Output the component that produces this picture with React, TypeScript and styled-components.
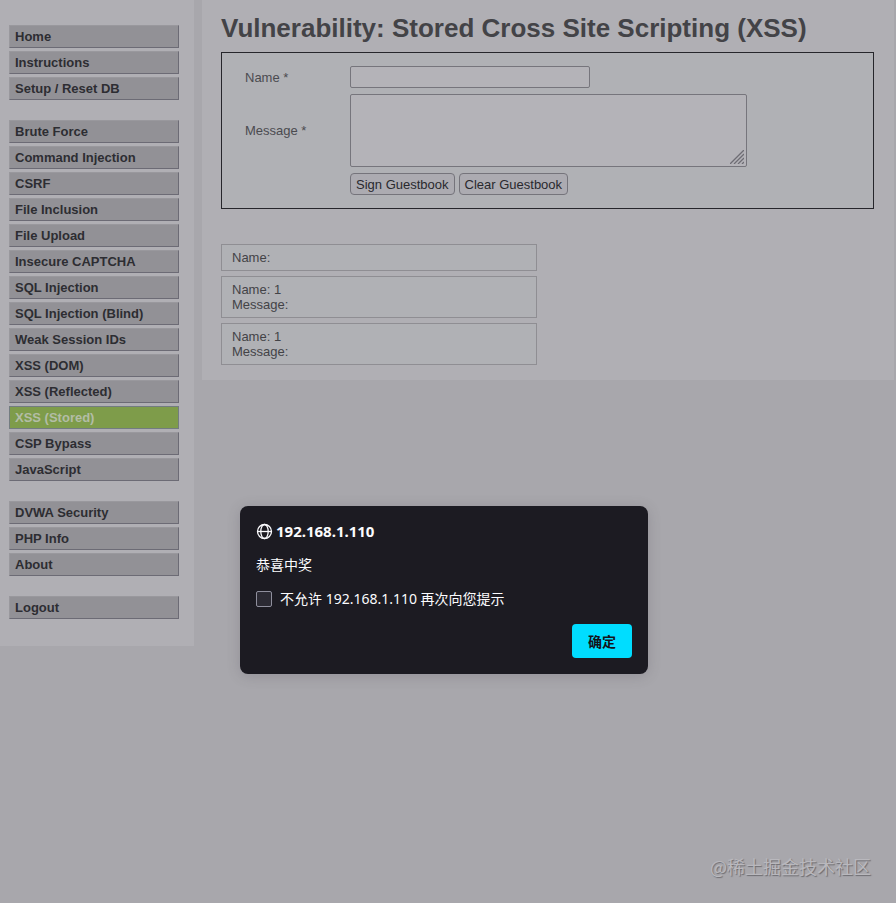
import React from "react";
import styled, { createGlobalStyle } from "styled-components";

const GlobalStyle = createGlobalStyle`
  *, *::before, *::after { box-sizing: border-box; }
  html, body { margin: 0; padding: 0; }
  body {
    background: #a8a7ac;
    color: #434347;
    font: 13px/15px "Liberation Sans", Arial, sans-serif;
  }
`;

const Page = styled.div`
  position: relative;
  display: flex;
  align-items: flex-start;
  gap: 8px;
  min-height: 100vh;
  padding-right: 2px;
`;

const Sidebar = styled.nav`
  flex: 0 0 194px;
  display: flex;
  flex-direction: column;
  gap: 20px;
  padding: 25px 15px 27px 9px;
  background: #b0afb4;
`;

const MenuGroup = styled.ul`
  display: flex;
  flex-direction: column;
  gap: 3px;
  margin: 0;
  padding: 0;
  list-style: none;
`;

const MenuLink = styled.a<{ $active?: boolean }>`
  display: block;
  height: 23px;
  padding: 0 5px;
  border: 1px solid;
  border-color: ${(p) => (p.$active ? "#737c80" : "#99989d #6c6b75 #6c6b75 #99989d")};
  background: ${(p) => (p.$active ? "#7e9c4a" : "#929196")};
  color: ${(p) => (p.$active ? "#b3bda6" : "#2d2d32")};
  font-weight: bold;
  line-height: 21px;
  text-decoration: none;
`;

const Main = styled.main`
  flex: 1;
  min-width: 0;
  padding: 12px 20px 15px 19px;
  background: #b0afb4;
`;

const Title = styled.h1`
  margin: 0 0 8px;
  color: #434347;
  font-size: 26px;
  line-height: 32px;
  font-weight: bold;
`;

const Form = styled.form`
  display: grid;
  grid-template-columns: 105px minmax(0, 1fr);
  gap: 6px 0;
  align-items: center;
  padding: 13px 23px;
  border: 1px solid #26262b;
  background: #b0b1b5;
`;

const Label = styled.label`
  color: #4b4b50;
`;

const TextInput = styled.input`
  width: 240px;
  height: 22px;
  padding: 1px 3px;
  border: 1px solid #76757c;
  border-radius: 2px;
  background: #b4b3b8;
  font: inherit;
`;

const TextAreaFrame = styled.div`
  position: relative;
  width: 397px;
  max-width: 100%;
  height: 73px;
`;

const TextArea = styled.textarea`
  display: block;
  width: 100%;
  height: 100%;
  padding: 2px 3px;
  border: 1px solid #76757c;
  border-radius: 2px;
  background: #b4b3b8;
  font: inherit;
  resize: none;
`;

const Grip = styled.svg`
  position: absolute;
  right: 3px;
  bottom: 3px;
  pointer-events: none;
`;

const Actions = styled.div`
  grid-column: 2;
  display: flex;
  gap: 4px;
`;

const FormButton = styled.button`
  height: 22px;
  padding: 0 5px;
  border: 1px solid #75747b;
  border-radius: 4px;
  background: #acabb1;
  color: #29292e;
  font: inherit;
`;

const Entries = styled.section`
  display: flex;
  flex-direction: column;
  gap: 5px;
  width: 316px;
  max-width: 100%;
  margin-top: 35px;
`;

const Entry = styled.div`
  padding: 5px 10px;
  border: 1px solid #8f8e93;
  background: #b0b1b5;
`;

const DialogLayer = styled.div`
  position: absolute;
  inset: 0;
  display: flex;
  justify-content: center;
  align-items: flex-start;
  padding: 506px 8px 0 0;
  font-family: "Noto Sans", "Noto Sans CJK SC", sans-serif;
`;

const Dialog = styled.div`
  display: flex;
  flex-direction: column;
  width: 408px;
  padding: 16px;
  border-radius: 8px;
  background: #1c1b22;
  color: #fbfbfe;
  font-size: 14px;
  line-height: 18px;
  box-shadow: 0 2px 14px rgba(58, 57, 68, 0.2);
`;

const DialogTitle = styled.div`
  display: flex;
  align-items: center;
  gap: 3px;
  height: 18px;
  font-size: 15px;
  line-height: 16px;
  font-weight: bold;
`;

const DialogMessage = styled.p`
  margin: 16px 0;
`;

const CheckLabel = styled.label`
  display: flex;
  align-items: center;
  gap: 8px;
`;

const CheckBox = styled.input`
  appearance: none;
  width: 16px;
  height: 16px;
  margin: 0;
  border: 1px solid #8f8f9d;
  border-radius: 2px;
  background: #2b2a33;
  &:checked { background: #00ddff; }
`;

const ConfirmButton = styled.button`
  align-self: flex-end;
  width: 60px;
  height: 34px;
  margin-top: 16px;
  padding: 0;
  border: 0;
  border-radius: 4px;
  background: #00ddff;
  color: #15141a;
  font: bold 14px/18px "Noto Sans CJK SC", sans-serif;
`;

const Watermark = styled.div`
  position: absolute;
  right: 25px;
  bottom: 24px;
  color: #b9b8bd;
  font: 18px/26px "Noto Sans CJK SC", sans-serif;
  text-shadow: 1px 1px 1px #6c6b70;
`;

const menu: string[][] = [
  ["Home", "Instructions", "Setup / Reset DB"],
  [
    "Brute Force", "Command Injection", "CSRF", "File Inclusion", "File Upload",
    "Insecure CAPTCHA", "SQL Injection", "SQL Injection (Blind)", "Weak Session IDs",
    "XSS (DOM)", "XSS (Reflected)", "XSS (Stored)", "CSP Bypass", "JavaScript",
  ],
  ["DVWA Security", "PHP Info", "About"],
  ["Logout"],
];

const entries: string[][] = [["Name:"], ["Name: 1", "Message:"], ["Name: 1", "Message:"]];

const GlobeIcon = () => (
  <svg width="17" height="17" viewBox="0 0 17 17" fill="none" stroke="#fbfbfe" strokeWidth="1.3" aria-hidden="true">
    <circle cx="8.5" cy="8.5" r="7" />
    <ellipse cx="8.5" cy="8.5" rx="3.7" ry="7" />
    <path d="M1.5 8.5h14" />
  </svg>
);

export default function App() {
  return (
    <Page>
      <GlobalStyle />
      <Sidebar>
        {menu.map((group) => (
          <MenuGroup key={group[0]}>
            {group.map((item) => (
              <li key={item}>
                <MenuLink href="#" $active={item === "XSS (Stored)"}>{item}</MenuLink>
              </li>
            ))}
          </MenuGroup>
        ))}
      </Sidebar>
      <Main>
        <Title>Vulnerability: Stored Cross Site Scripting (XSS)</Title>
        <Form onSubmit={(e) => e.preventDefault()}>
          <Label htmlFor="name">Name *</Label>
          <TextInput id="name" type="text" />
          <Label htmlFor="message">Message *</Label>
          <TextAreaFrame>
            <TextArea id="message" />
            <Grip width="14" height="14" viewBox="0 0 14 14" stroke="#6e6d74" strokeWidth="1.3" aria-hidden="true">
              <path d="M0 14L14 0M4 14L14 4M8 14l6-6M12 14l2-2" />
            </Grip>
          </TextAreaFrame>
          <Actions>
            <FormButton type="submit">Sign Guestbook</FormButton>
            <FormButton type="button">Clear Guestbook</FormButton>
          </Actions>
        </Form>
        <Entries>
          {entries.map((lines, i) => (
            <Entry key={i}>
              {lines.map((line) => <div key={line}>{line}</div>)}
            </Entry>
          ))}
        </Entries>
      </Main>
      <DialogLayer>
        <Dialog role="alertdialog" aria-labelledby="dialog-title" aria-describedby="dialog-message">
          <DialogTitle id="dialog-title"><GlobeIcon />192.168.1.110</DialogTitle>
          <DialogMessage id="dialog-message">恭喜中奖</DialogMessage>
          <CheckLabel>
            <CheckBox type="checkbox" />
            不允许 192.168.1.110 再次向您提示
          </CheckLabel>
          <ConfirmButton type="button">确定</ConfirmButton>
        </Dialog>
      </DialogLayer>
      <Watermark>@稀土掘金技术社区</Watermark>
    </Page>
  );
}
